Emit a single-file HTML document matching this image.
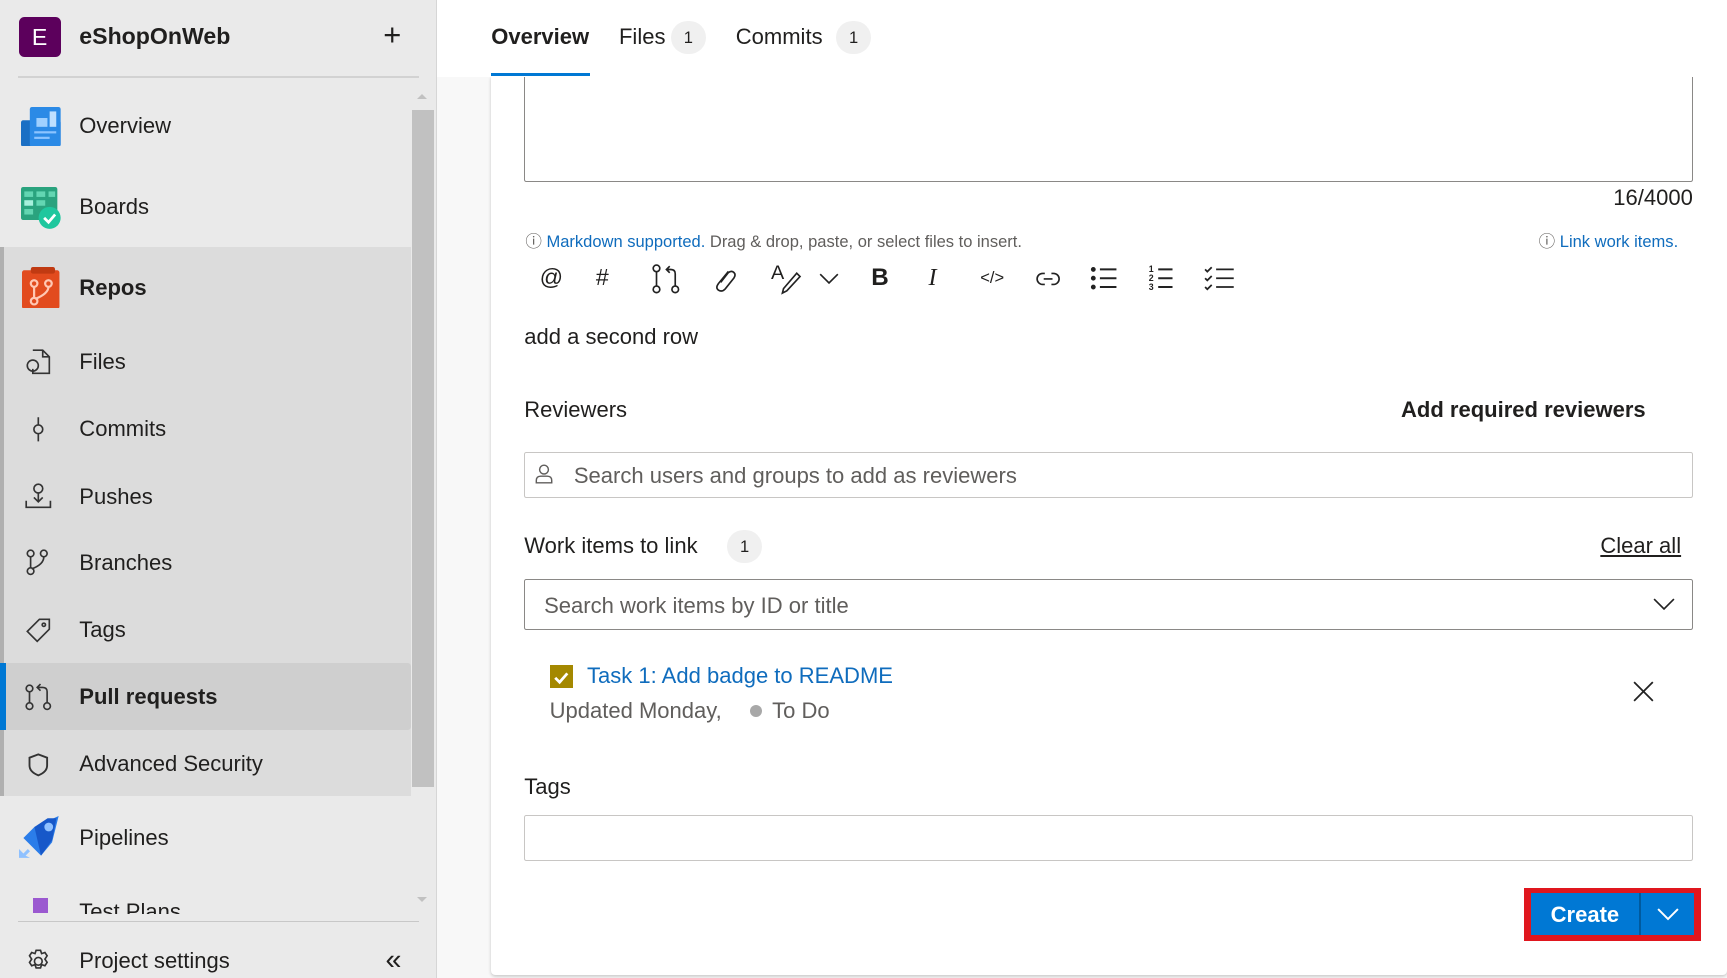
<!DOCTYPE html>
<html><head><meta charset="utf-8"><style>
html,body{margin:0;padding:0;width:1727px;height:978px;overflow:hidden;background:#f8f8f8;font-family:"Liberation Sans",sans-serif;color:#201f1e}
#w{zoom:1.10140;width:1568px;height:888px;position:relative;overflow:hidden}
.a{position:absolute;white-space:nowrap}
#side{position:absolute;left:0;top:0;width:396px;height:888px;background:#eaeaea;border-right:1px solid #d6d6d6}
.nav{position:absolute;left:72px;font-size:20px;line-height:24px;color:#201f1e}
.ic{position:absolute;left:22px;width:26px;height:26px}
.t{font-size:20px;line-height:24px}
.box{position:absolute;background:#fff;box-sizing:border-box}
.badge{position:absolute;width:32px;height:30px;border-radius:15px;background:#f0f0f0;font-size:15px;line-height:30px;text-align:center}
</style></head><body><div id="w">
<div id="side">
 <div class="a" style="left:17px;top:15px;width:38px;height:37px;background:#5c005c;border-radius:5px;color:#fff;font-size:21px;line-height:37px;text-align:center">E</div>
 <div class="a" style="left:72px;top:21px;font-size:21px;font-weight:bold">eShopOnWeb</div>
 <div class="a" style="left:348px;top:15px;font-size:28px;font-weight:300;line-height:32px">+</div>
 <div class="a" style="left:16px;top:69px;width:364px;height:2px;background:#d2d2d2"></div>
 <div class="a" style="left:4px;top:224px;width:369px;height:499px;background:#dcdcdc"></div>
 <div class="a" style="left:0;top:224px;width:4px;height:499px;background:#b0b0b0"></div>
 <div class="a" style="left:4px;top:602px;width:369px;height:61px;background:#cfcfcf;border-radius:3px"></div>
 <div class="a" style="left:0;top:602px;width:5px;height:61px;background:#0078d4"></div>
 <div class="a" style="left:374px;top:100px;width:20px;height:615px;background:#c1c1c1"></div>
 <div class="a" style="left:379px;top:85px;border:5px solid transparent;border-bottom-color:#c1c1c1;border-top:0"></div>
 <div class="a" style="left:379px;top:814px;border:5px solid transparent;border-top-color:#c1c1c1;border-bottom:0"></div>
 <div class="a" style="left:19px;top:97px;width:36px;height:36px"><svg width="36" height="36"><rect x="0" y="12" width="36" height="24" rx="2" fill="#1a6fc4"/><rect x="8" y="0" width="28" height="36" rx="2" fill="#2b8ae6"/><rect x="14" y="10" width="10" height="8" fill="#9fd0ff"/><rect x="26" y="4" width="6" height="14" fill="#bfe0ff"/><rect x="12" y="22" width="20" height="2" fill="#8cc4ff"/><rect x="12" y="27" width="14" height="2" fill="#8cc4ff"/></svg></div>
 <div class="a" style="left:19px;top:170px;width:38px;height:38px"><svg width="38" height="38"><rect x="0" y="0" width="33" height="30" rx="2" fill="#2aa37e"/><rect x="3" y="4" width="8" height="5" fill="#63d6b2"/><rect x="14" y="4" width="8" height="5" fill="#63d6b2"/><rect x="25" y="4" width="6" height="5" fill="#63d6b2"/><rect x="3" y="12" width="8" height="5" fill="#a7f0dc"/><rect x="14" y="12" width="8" height="5" fill="#63d6b2"/><rect x="3" y="20" width="8" height="5" fill="#63d6b2"/><circle cx="26" cy="28" r="10" fill="#1fc79e"/><path d="M21 28l4 4 6-7" stroke="#fff" stroke-width="2.5" fill="none"/></svg></div>
 <div class="a" style="left:20px;top:242px;width:36px;height:38px"><svg width="36" height="38"><rect x="0" y="3" width="34" height="35" rx="2" fill="#e24b1e"/><rect x="8" y="0" width="22" height="6" rx="2" fill="#c03a12"/><g stroke="#ffc7b3" stroke-width="2" fill="none"><circle cx="11" cy="15" r="3"/><circle cx="24" cy="15" r="3"/><circle cx="11" cy="31" r="3"/><path d="M11 18v10M24 18q0 6-12 11"/></g></svg></div>
 <svg class="ic" style="top:316px" viewBox="0 0 26 26" fill="none" stroke="#333" stroke-width="1.5"><path d="M8 2h9l6 6v15H8v-4M17 2v6h6"/><circle cx="8" cy="16" r="5"/></svg>
 <svg class="ic" style="top:377px" viewBox="0 0 26 26" fill="none" stroke="#333" stroke-width="1.5"><circle cx="13" cy="13" r="4"/><path d="M13 2v7M13 17v7"/></svg>
 <svg class="ic" style="top:438px" viewBox="0 0 26 26" fill="none" stroke="#333" stroke-width="1.5"><circle cx="13" cy="6" r="4"/><path d="M13 10v8M9 14l4 4 4-4M2 17v6h22v-6"/></svg>
 <svg class="ic" style="top:498px" viewBox="0 0 26 26" fill="none" stroke="#333" stroke-width="1.5"><circle cx="6" cy="5" r="3"/><circle cx="18" cy="5" r="3"/><circle cx="6" cy="21" r="3"/><path d="M6 8v10M18 8q0 7-11 11"/></svg>
 <svg class="ic" style="top:559px" viewBox="0 0 26 26" fill="none" stroke="#333" stroke-width="1.5"><path d="M14 3h9v9L12 23 3 14z"/><circle cx="18" cy="8" r="1.5"/></svg>
 <svg class="ic" style="top:620px" viewBox="0 0 26 26" fill="none" stroke="#333" stroke-width="1.5"><circle cx="5" cy="5" r="3"/><circle cx="5" cy="21" r="3"/><circle cx="21" cy="21" r="3"/><path d="M5 8v10M21 18V8q0-4-4-4h-4M15 1l-3 3 3 3"/></svg>
 <svg class="ic" style="top:681px" viewBox="0 0 26 26" fill="none" stroke="#333" stroke-width="1.7"><path d="M13 4l8 3v7q0 6-8 9-8-3-8-9V7z"/></svg>
 <div class="a" style="left:17px;top:741px;width:38px;height:38px"><svg width="38" height="38"><path d="M4 20l10-10L36 0 30 24 20 36z" fill="#2b7de9"/><path d="M14 10l12-8 8 0-4 20-10 14z" fill="#1758c9"/><circle cx="27" cy="10" r="4" fill="#8fc1ff"/><path d="M0 38v-8l4 4 4-4 2 2-4 4 4 2z" fill="#8fc1ff"/></svg></div>
 <div class="a" style="left:30px;top:815px;width:14px;height:14px;background:#9b59d0"></div>
 <div class="nav" style="top:816px">Test Plans</div>
 <div class="a" style="left:0;top:830px;width:373px;height:6px;background:#eaeaea"></div>
 <div class="a" style="left:16px;top:836px;width:364px;height:1px;background:#c8c8c8"></div>
 <svg class="ic" style="top:860px" viewBox="0 0 26 26" fill="none" stroke="#333" stroke-width="1.5"><circle cx="13" cy="13" r="3.5"/><path d="M11 3h4l1 3 3-1 2 3-2 3 2 3-2 3-3-1-1 3h-4l-1-3-3 1-2-3 2-3-2-3 2-3 3 1z"/></svg>
 <div class="nav" style="top:103px">Overview</div>
 <div class="nav" style="top:176px">Boards</div>
 <div class="nav" style="top:250px;font-weight:bold">Repos</div>
 <div class="nav" style="top:317px">Files</div>
 <div class="nav" style="top:378px">Commits</div>
 <div class="nav" style="top:439px">Pushes</div>
 <div class="nav" style="top:499px">Branches</div>
 <div class="nav" style="top:560px">Tags</div>
 <div class="nav" style="top:621px;font-weight:bold">Pull requests</div>
 <div class="nav" style="top:682px">Advanced Security</div>
 <div class="nav" style="top:749px">Pipelines</div>
 <div class="nav" style="top:861px">Project settings</div>
 <div class="a" style="left:350px;top:858px;font-size:26px;line-height:28px">«</div>
</div>
<div class="a" style="left:446px;top:70px;width:1122px;height:815px;background:#fff;box-shadow:0 1px 3px rgba(0,0,0,.2);border-radius:0 0 4px 4px"></div>
<div class="box" style="left:476px;top:62px;width:1061px;height:103px;border:1px solid #8a8886;border-radius:0 0 2px 2px"></div>
<div class="a" style="left:397px;top:0;width:1171px;height:70px;background:#fff"></div>
<div class="a t" style="left:446px;top:22px;font-weight:bold;font-size:20px">Overview</div>
<div class="a" style="left:446px;top:66px;width:90px;height:3px;background:#0078d4"></div>
<div class="a t" style="left:562px;top:22px">Files</div>
<div class="badge" style="left:609px;top:19px">1</div>
<div class="a t" style="left:668px;top:22px">Commits</div>
<div class="badge" style="left:759px;top:19px">1</div>
<div class="a t" style="left:1437px;top:168px;width:100px;text-align:right">16/4000</div>
<div class="a" style="left:477px;top:207px;font-size:15px;color:#605e5c">ⓘ <span style="color:#0f6cbd">Markdown supported.</span> Drag &amp; drop, paste, or select files to insert.</div>
<div class="a" style="left:1397px;top:207px;font-size:15px;color:#0f6cbd"><span style="color:#605e5c">ⓘ</span> Link work items.</div>
<div class="a" style="left:490px;top:240px;font-size:21px">@</div>
<div class="a" style="left:541px;top:240px;font-size:21px">#</div>
<svg class="a" style="left:591px;top:240px" width="28" height="28" fill="none" stroke="#222" stroke-width="1.5"><circle cx="5" cy="4" r="3"/><circle cx="5" cy="23" r="3"/><circle cx="22" cy="23" r="3"/><path d="M5 7v13M22 20V9q0-4-4-4h-3M17 2l-3 3 3 3"/></svg>
<svg class="a" style="left:647px;top:242px" width="22" height="24" fill="none" stroke="#222" stroke-width="1.5"><path d="M14 4L5 15q-3 4 0 6t6-1l8-10q2-3 0-5t-5 0L7 14"/></svg>
<div class="a" style="left:700px;top:238px;font-size:18px">A</div>
<svg class="a" style="left:706px;top:246px" width="22" height="22" fill="none" stroke="#222" stroke-width="1.5"><path d="M17 2l3 3L8 18l-4 2 1-4z"/></svg>
<svg class="a" style="left:743px;top:247px" width="20" height="12" fill="none" stroke="#222" stroke-width="1.5"><path d="M2 2l8 8 8-8"/></svg>
<div class="a" style="left:791px;top:240px;font-size:22px;font-weight:bold">B</div>
<div class="a" style="left:843px;top:240px;font-size:22px;font-style:italic;font-family:'Liberation Serif',serif">I</div>
<div class="a" style="left:890px;top:243px;font-size:15px">&lt;/&gt;</div>
<svg class="a" style="left:941px;top:244px" width="22" height="18" fill="none" stroke="#222" stroke-width="1.5"><path d="M8 4H6a5 5 0 000 10h2M14 4h2a5 5 0 010 10h-2M7 9h8"/></svg>
<svg class="a" style="left:990px;top:241px" width="26" height="24" stroke="#222" stroke-width="1.8"><path d="M9 4h15M9 12h15M9 20h15"/><circle cx="3" cy="4" r="1.3" fill="#222"/><circle cx="3" cy="12" r="1.3" fill="#222"/><circle cx="3" cy="20" r="1.3" fill="#222"/></svg>
<div class="a" style="left:1043px;top:241px;font-size:8px;line-height:8px;font-weight:bold">1<br>2<br>3</div>
<svg class="a" style="left:1050px;top:241px" width="16" height="24" stroke="#222" stroke-width="1.8"><path d="M2 4h13M2 12h13M2 20h13"/></svg>
<svg class="a" style="left:1093px;top:241px" width="28" height="24" fill="none" stroke="#222" stroke-width="1.6"><path d="M1 4l2 2 4-4M1 12l2 2 4-4M1 20l2 2 4-4M11 4h16M11 12h16M11 20h16"/></svg>
<div class="a t" style="left:476px;top:294px">add a second row</div>
<div class="a t" style="left:476px;top:360px">Reviewers</div>
<div class="a t" style="left:1272px;top:360px;font-weight:bold">Add required reviewers</div>
<div class="box" style="left:476px;top:410px;width:1061px;height:42px;border:1px solid #c8c6c4;border-radius:2px"></div>
<svg class="a" style="left:484px;top:420px" width="20" height="20" fill="none" stroke="#605e5c" stroke-width="1.3"><circle cx="10" cy="6" r="4"/><path d="M3 18v-2q0-4 4-4h6q4 0 4 4v2z"/></svg>
<div class="a t" style="left:521px;top:420px;color:#605e5c">Search users and groups to add as reviewers</div>
<div class="a t" style="left:476px;top:484px">Work items to link</div>
<div class="badge" style="left:660px;top:481px">1</div>
<div class="a t" style="left:1453px;top:484px;text-decoration:underline">Clear all</div>
<div class="box" style="left:476px;top:526px;width:1061px;height:46px;border:1px solid #8a8886;border-radius:2px"></div>
<div class="a t" style="left:494px;top:538px;color:#605e5c">Search work items by ID or title</div>
<svg class="a" style="left:1501px;top:543px" width="20" height="12" fill="none" stroke="#222" stroke-width="1.5"><path d="M1 1l9 9 9-9"/></svg>
<div class="a" style="left:499px;top:604px;width:21px;height:21px;background:#a48800"></div>
<svg class="a" style="left:502px;top:607px" width="15" height="15" fill="none" stroke="#fff" stroke-width="2.5"><path d="M2 8l4 4 7-8"/></svg>
<div class="a t" style="left:533px;top:602px;color:#0f6cbd">Task 1: Add badge to README</div>
<div class="a t" style="left:499px;top:634px;color:#605e5c">Updated Monday,</div>
<div class="a" style="left:681px;top:640px;width:11px;height:11px;border-radius:50%;background:#a8a8a8"></div>
<div class="a t" style="left:701px;top:634px;color:#605e5c">To Do</div>
<svg class="a" style="left:1483px;top:618px" width="19" height="19" stroke="#222" stroke-width="1.6"><path d="M1 1l17 17M18 1L1 18"/></svg>
<div class="a t" style="left:476px;top:703px">Tags</div>
<div class="box" style="left:476px;top:740px;width:1061px;height:42px;border:1px solid #c8c6c4;border-radius:2px"></div>
<div class="a" style="left:1384px;top:806px;width:160px;height:48px;background:#e0161e"></div>
<div class="a" style="left:1390px;top:811px;width:148px;height:38px;background:#0078d4"></div>
<div class="a" style="left:1488px;top:811px;width:2px;height:38px;background:#005a9e"></div>
<div class="a" style="left:1390px;top:818px;width:98px;text-align:center;color:#fff;font-weight:bold;font-size:20px;line-height:26px">Create</div>
<svg class="a" style="left:1504px;top:824px" width="20" height="12" fill="none" stroke="#fff" stroke-width="1.8"><path d="M1 1l9 9 9-9"/></svg>
</div></body></html>
